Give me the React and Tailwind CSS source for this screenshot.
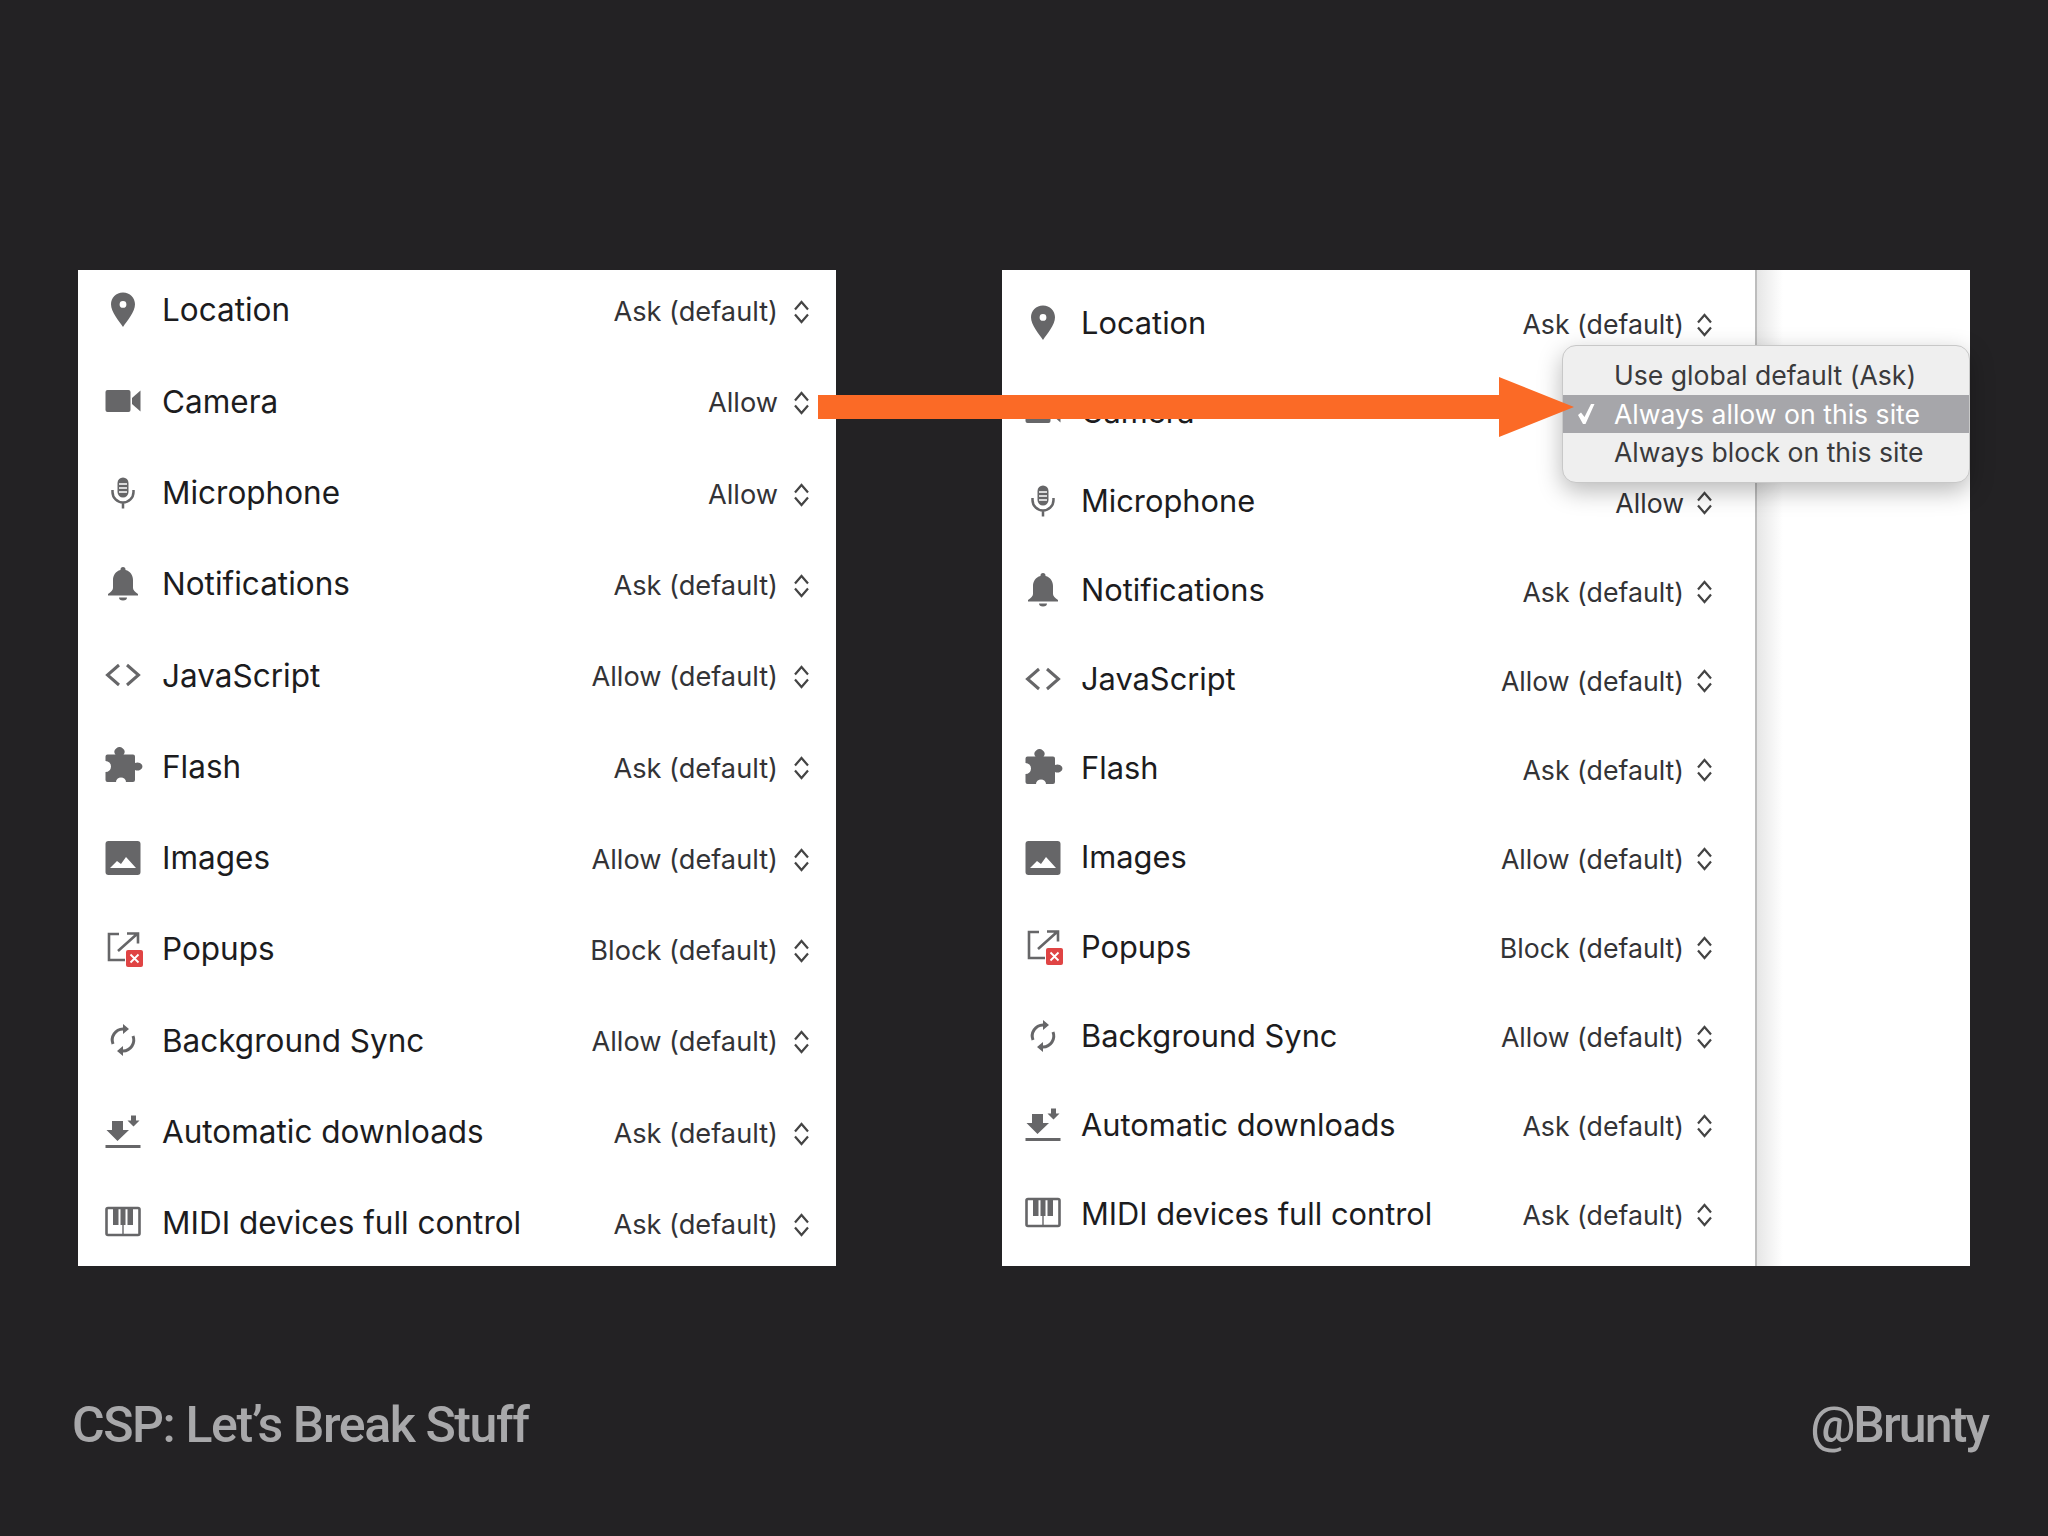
const GREY = '#666668';

function Chevrons() {
  return (
    <svg width="17" height="24" viewBox="0 0 17 24" fill="none" stroke="#444" strokeWidth="2.2" className="shrink-0">
      <path d="M2 9.5L8.5 2 15 9.5" />
      <path d="M2 14.5L8.5 22 15 14.5" />
    </svg>
  );
}

function Icon({ children }) {
  return (
    <svg width="36" height="36" viewBox="0 0 36 36" fill={GREY} className="shrink-0 overflow-visible">
      {children}
    </svg>
  );
}

const ICONS = {
  location: (
    <path
      fillRule="evenodd"
      d="M18 .5C11 .5 6 5.7 6 12.3 6 20 14 29 18 35c4-6 12-15 12-22.7C30 5.7 25 .5 18 .5zM18 9a3.4 3.4 0 1 0 0 6.8 3.4 3.4 0 0 0 0-6.8z"
    />
  ),
  camera: (
    <>
      <rect x="0.5" y="7" width="25" height="22" rx="2" />
      <path d="M27 15l8.5-7.5v21L27 21z" />
    </>
  ),
  mic: (
    <>
      <rect x="12.5" y="2.5" width="11" height="20" rx="5.5" />
      <path d="M14 9h8M14 13h8M14 17h8" stroke="#fff" strokeWidth="1.4" />
      <path d="M7.5 15v2a10.5 10.5 0 0 0 21 0v-2M18 27.5v6" fill="none" stroke={GREY} strokeWidth="2.5" />
    </>
  ),
  bell: (
    <>
      <path d="M18 1a2.5 2.5 0 0 0-2.5 2.5v.6C10.5 5.4 8 9.5 8 14v8c0 2-2 4-5 6v1.5h30V28c-3-2-5-4-5-6v-8c0-4.5-2.5-8.6-7.5-9.9v-.6A2.5 2.5 0 0 0 18 1z" />
      <path d="M14 31.5h8a4 3 0 0 1-8 0z" />
    </>
  ),
  code: <path d="M14 8L2.5 18 14 28M22 8l11.5 10L22 28" fill="none" stroke={GREY} strokeWidth="3" />,
  puzzle: (
    <path d="M2 6.5h8.5a5 4.5 0 1 1 8 0H28a2 2 0 0 1 2 2v6.5a5 4 0 1 1 0 7V32a2 2 0 0 1-2 2h-7a5 4.5 0 0 0-10 0H2.5a2 2 0 0 1-2-2v-8a5 5 0 0 0 0-11V8.5a2 2 0 0 1 2-2z" />
  ),
  image: (
    <>
      <rect x="0.5" y="1" width="35" height="34" rx="3" />
      <path d="M5 28l7-7 4 3 5-7 10 11z" fill="#fff" />
    </>
  ),
  popup: (
    <>
      <path d="M14 3H4v26h16" fill="none" stroke={GREY} strokeWidth="2.6" />
      <path d="M13 20L32 3M22 2.5h11v10" fill="none" stroke={GREY} strokeWidth="2.6" />
      <rect x="21" y="19" width="17" height="17" rx="2" fill="#e04444" />
      <path d="M25.5 23.5l8 8M33.5 23.5l-8 8" stroke="#fff" strokeWidth="1.8" />
    </>
  ),
  sync: (
    <>
      <path d="M8 22a11 11 0 0 1 10-15M28 14a11 11 0 0 1-10 15" fill="none" stroke={GREY} strokeWidth="3" />
      <path d="M18 2l6 5-6 5zM18 34l-6-5 6-5z" />
    </>
  ),
  download: (
    <>
      <path d="M7 7h11v9h6L12.5 27 1.5 16h5.5z" />
      <path d="M26 1.5h5v5h3.5l-6 6-6-6H26z" />
      <rect x="0.5" y="31" width="35" height="3" />
    </>
  ),
  midi: (
    <>
      <rect x="1.5" y="3" width="33" height="27" rx="1.5" fill="none" stroke={GREY} strokeWidth="2.6" />
      <path d="M8 3h5.5v17H8zM15.5 3h5v17h-5zM22.5 3H28v17h-5.5z" />
      <path d="M18 20v10" stroke={GREY} strokeWidth="1.4" />
    </>
  ),
};

const ROWS = [
  ['location', 'Location', 'Ask (default)'],
  ['camera', 'Camera', 'Allow'],
  ['mic', 'Microphone', 'Allow'],
  ['bell', 'Notifications', 'Ask (default)'],
  ['code', 'JavaScript', 'Allow (default)'],
  ['puzzle', 'Flash', 'Ask (default)'],
  ['image', 'Images', 'Allow (default)'],
  ['popup', 'Popups', 'Block (default)'],
  ['sync', 'Background Sync', 'Allow (default)'],
  ['download', 'Automatic downloads', 'Ask (default)'],
  ['midi', 'MIDI devices full control', 'Ask (default)'],
];

function Row({ row, labelClass, valueClass, chevronClass, gapClass, menuOpen }) {
  const [icon, label, value] = row;
  return (
    <div className="flex h-10 items-center">
      <Icon>{ICONS[icon]}</Icon>
      <span className={'flex-1 text-[#1c1c1e] ' + gapClass + ' ' + labelClass}>{label}</span>
      {/* the open menu replaces the select on this row */}
      {!menuOpen && (
        <>
          <span className={'text-[#333336] ' + valueClass}>{value}</span>
          <span className={'flex ' + chevronClass}>
            <Chevrons />
          </span>
        </>
      )}
    </div>
  );
}

function Dropdown() {
  return (
    <div className="absolute left-[560px] top-[75px] w-[408px] overflow-hidden rounded-[14px] border border-[#c8c8c8] bg-[#efefef] py-[10px] text-[26.6px] leading-[38.5px] text-[#3a3a3c] shadow-[0_8px_24px_rgba(0,0,0,0.28)]">
      <div className="pl-[51px]">Use global default (Ask)</div>
      <div className="relative bg-[#a6a6aa] pl-[51px] text-white">
        <svg width="18" height="22" viewBox="0 0 18 22" fill="#fff" className="absolute left-[14px] top-[8px]">
          <path d="M1 12l3-2.5 3.5 4.5L14 1h3.5L8.5 21H6z" />
        </svg>
        Always allow on this site
      </div>
      <div className="pl-[51px]">Always block on this site</div>
    </div>
  );
}

function Arrow() {
  return (
    <svg width="760" height="60" viewBox="0 0 760 60" fill="#fb6a26" className="absolute left-[818px] top-[377px]">
      <rect x="0" y="18" width="690" height="24" />
      <path d="M681 0l75 30-75 30z" />
    </svg>
  );
}

export default function App() {
  return (
    <div
      className="relative flex h-[1536px] w-[2048px] flex-col overflow-hidden bg-[#232224] pt-[270px]"
      style={{ fontFamily: 'Inter, sans-serif' }}
    >
      <div className="flex h-[996px] gap-[166px] pl-[78px]">
        <section className="flex w-[758px] flex-col justify-between bg-white pb-[23px] pl-[27px] pr-[26px] pt-[20px]">
          {ROWS.map((row) => (
            <Row
              key={row[0]}
              row={row}
              labelClass="text-[31.5px]"
              valueClass="mt-[5px] text-[27.2px]"
              chevronClass="ml-[15px] mt-[4px]"
              gapClass="ml-[21px]"
            />
          ))}
        </section>

        <section className="flex w-[968px]">
          <div className="flex w-[755px] flex-col justify-between border-r-2 border-[#bdbdbd] bg-white pb-[32px] pl-[23px] pr-[42px] pt-[33px]">
            {ROWS.map((row) => (
              <Row
                key={row[0]}
                row={row}
                labelClass="text-[30.8px]"
                valueClass="mt-[3px] text-[26.7px]"
                chevronClass="ml-[12px] mt-[3px]"
                gapClass="ml-[20px]"
                menuOpen={row[0] === 'camera'}
              />
            ))}
          </div>
          <div className="flex-1 bg-[linear-gradient(to_right,#e6e6e6,#ffffff_26px)]" />
        </section>
      </div>

      <div className="flex flex-1 items-start justify-between pl-[72px] pr-[60px] pt-[129px] text-[50px] font-medium leading-[60px] text-[#a8a8aa]">
        <span className="tracking-[-1.4px]" style={{ fontFamily: 'Roboto, sans-serif' }}>CSP: Let’s Break Stuff</span>
        <span className="tracking-[-1.9px]" style={{ fontFamily: 'Roboto, sans-serif' }}>@Brunty</span>
      </div>

      <div className="absolute left-[1002px] top-[270px]">
        <Dropdown />
      </div>
      <Arrow />
    </div>
  );
}
